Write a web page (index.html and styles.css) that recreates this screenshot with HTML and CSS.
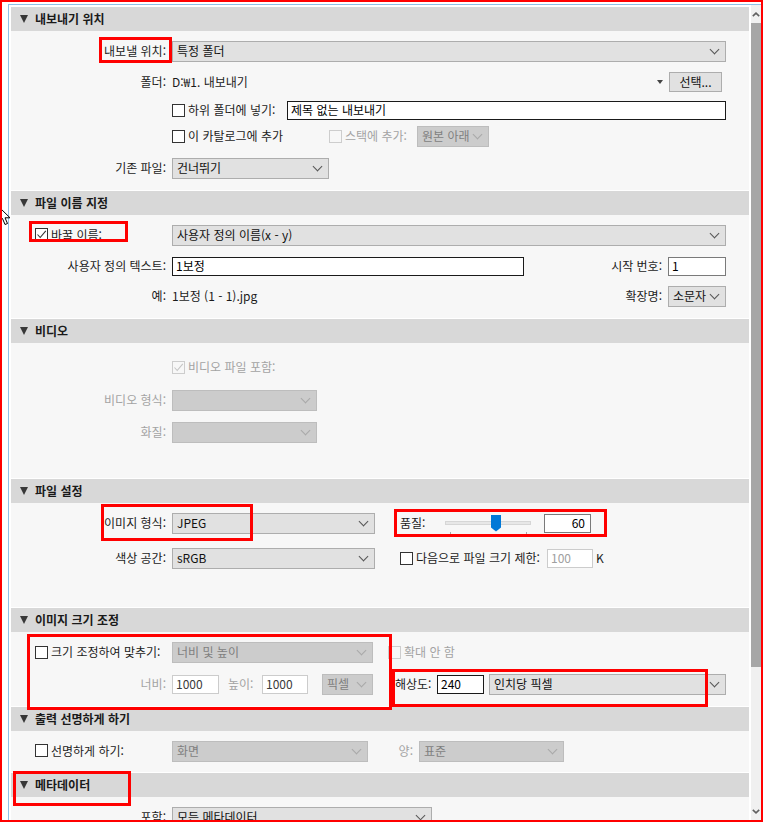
FILE: index.html
```html
<!DOCTYPE html>
<html lang="ko">
<head>
<meta charset="utf-8">
<title>내보내기</title>
<link rel="stylesheet" href="styles.css">
</head>
<body>
<div class="frame">
  <div class="panel">
    <div class="sections">

      <section class="sec">
        <div class="hdr"><span class="tri"></span>내보내기 위치</div>
        <div class="body b1">
          <div class="row">
            <span class="lbl">내보낼 위치:</span>
            <div class="sel grow">특정 폴더</div>
          </div>
          <div class="row">
            <span class="lbl">폴더:</span>
            <span>D:₩1. 내보내기</span>
            <span class="spacer"></span>
            <span class="ddtri"></span>
            <div class="btn">선택...</div>
          </div>
          <div class="row">
            <span class="lbl"></span>
            <span class="chk w115"><span class="cb"></span>하위 폴더에 넣기:</span>
            <div class="in blk grow">제목 없는 내보내기</div>
          </div>
          <div class="row">
            <span class="lbl"></span>
            <span class="chk w157"><span class="cb"></span>이 카탈로그에 추가</span>
            <span class="chk dis w82"><span class="cb"></span>스택에 추가:</span>
            <div class="sel dis w72 ml6">원본 아래</div>
          </div>
          <div class="row">
            <span class="lbl">기존 파일:</span>
            <div class="sel w157">건너뛰기</div>
          </div>
        </div>
      </section>

      <section class="sec">
        <div class="hdr"><span class="tri"></span>파일 이름 지정</div>
        <div class="body b2">
          <div class="row">
            <span class="lbl lbl-chk"><span class="cb on"><svg viewBox="0 0 11 11"><polyline points="1.5,5.5 4.2,8.5 9.8,1.8"/></svg></span>바꿀 이름:</span>
            <div class="sel grow">사용자 정의 이름(x - y)</div>
          </div>
          <div class="row">
            <span class="lbl">사용자 정의 텍스트:</span>
            <div class="in blk w352">1보정</div>
            <span class="spacer"></span>
            <span>시작 번호:</span>
            <div class="in w58 ml6">1</div>
          </div>
          <div class="row">
            <span class="lbl">예:</span>
            <span>1보정 (1 - 1).jpg</span>
            <span class="spacer"></span>
            <span>확장명:</span>
            <div class="sel w58 ml6">소문자</div>
          </div>
        </div>
      </section>

      <section class="sec">
        <div class="hdr"><span class="tri"></span>비디오</div>
        <div class="body b3">
          <div class="row">
            <span class="lbl"></span>
            <span class="chk dis"><span class="cb on"><svg viewBox="0 0 11 11"><polyline points="1.5,5.5 4.2,8.5 9.8,1.8"/></svg></span>비디오 파일 포함:</span>
          </div>
          <div class="row">
            <span class="lbl gray">비디오 형식:</span>
            <div class="sel dis w145"></div>
          </div>
          <div class="row">
            <span class="lbl gray">화질:</span>
            <div class="sel dis w145"></div>
          </div>
        </div>
      </section>

      <section class="sec">
        <div class="hdr"><span class="tri"></span>파일 설정</div>
        <div class="body b4">
          <div class="row">
            <span class="lbl">이미지 형식:</span>
            <div class="sel w203">JPEG</div>
            <span class="qlbl">품질:</span>
            <div class="slider">
              <div class="track"></div>
              <svg class="thumb" viewBox="0 0 10 17"><polygon points="0,0 10,0 10,12.5 5,16.5 0,12.5"/></svg>
              <span class="tick t1"></span>
              <span class="tick t2"></span>
            </div>
            <div class="in num w47">60</div>
          </div>
          <div class="row">
            <span class="lbl">색상 공간:</span>
            <div class="sel w203">sRGB</div>
            <span class="chk w147 ml25"><span class="cb"></span>다음으로 파일 크기 제한:</span>
            <div class="in dis w46">100</div>
            <span class="ml3">K</span>
          </div>
        </div>
      </section>

      <section class="sec">
        <div class="hdr"><span class="tri"></span>이미지 크기 조정</div>
        <div class="body b5">
          <div class="row">
            <span class="lbl lbl-chk"><span class="cb"></span>크기 조정하여 맞추기:</span>
            <div class="sel dis w201">너비 및 높이</div>
            <span class="chk dis ml15"><span class="cb"></span>확대 안 함</span>
          </div>
          <div class="row">
            <span class="lbl gray">너비:</span>
            <div class="in dim w47">1000</div>
            <span class="gray hlbl">높이:</span>
            <div class="in dim w46">1000</div>
            <div class="sel dis w51 ml14">픽셀</div>
            <span class="rlbl">해상도:</span>
            <div class="in blk w47">240</div>
            <div class="sel grow ml5">인치당 픽셀</div>
          </div>
        </div>
      </section>

      <section class="sec">
        <div class="hdr"><span class="tri"></span>출력 선명하게 하기</div>
        <div class="body b6">
          <div class="row">
            <span class="lbl lbl-chk"><span class="cb"></span>선명하게 하기:</span>
            <div class="sel dis w196">화면</div>
            <span class="gray amt">양:</span>
            <div class="sel dis w145">표준</div>
          </div>
        </div>
      </section>

      <section class="sec">
        <div class="hdr"><span class="tri"></span>메타데이터</div>
        <div class="body b7">
          <div class="row">
            <span class="lbl">포함:</span>
            <div class="sel w260">모든 메타데이터</div>
          </div>
        </div>
      </section>

    </div>
    <div class="scrollbar">
      <div class="sb-btn"><svg viewBox="0 0 8 5"><polyline points="0.8,4.2 4,1.2 7.2,4.2"/></svg></div>
      <div class="sb-thumb"></div>
      <div class="sb-track"></div>
      <div class="sb-btn"><svg viewBox="0 0 8 5"><polyline points="0.8,0.8 4,3.8 7.2,0.8"/></svg></div>
    </div>
  </div>

  <div class="mark m-a"></div>
  <div class="mark m-b"></div>
  <div class="mark m-c"></div>
  <div class="mark m-d"></div>
  <div class="mark m-e"></div>
  <div class="mark m-f"></div>
  <div class="mark m-g"></div>

  <svg class="cursor" viewBox="0 0 12 20"><polygon points="0,0 0,15 3.5,11.5 6,17.5 8.5,16.5 6,10.8 11,10.8"/></svg>
</div>
</body>
</html>
```

FILE: styles.css
```css
* { box-sizing: border-box; }
html, body { margin: 0; padding: 0; background: #fff; }
body {
  font-family: "Noto Sans CJK KR", "Noto Sans", sans-serif;
  font-size: 12px;
  line-height: 1.2;
  color: #1b1b1b;
}

.frame {
  position: relative;
  width: 763px;
  height: 822px;
  border: 2px solid #ff0000;
  background: #fff;
  overflow: hidden;
  padding: 2px 0 0 6px;
}

.panel {
  display: flex;
  height: 816px;
  border-top: 1px solid #8fbfe6;
  border-left: 1px solid #8fbfe6;
  padding-left: 2px;
  gap: 2px;
}

.sections {
  width: 738px;
  flex-shrink: 0;
  margin-top: 2px;
  overflow: hidden;
}

.sec { margin-bottom: 1px; }

.hdr {
  height: 24px;
  background: #d8d8d8;
  display: flex;
  align-items: center;
  padding-left: 9px;
  font-weight: 700;
  color: #1a1a1a;
}
.tri {
  width: 0; height: 0;
  border-left: 4.5px solid transparent;
  border-right: 4.5px solid transparent;
  border-top: 8px solid #383838;
  margin-right: 7px;
}

.body {
  background: #f7f7f7;
  display: grid;
  padding-right: 23px;
  align-content: start;
}
.b1 { height: 159px; padding-top: 6px; grid-template-rows: 29px 32px 25px 27px 37px; }
.b2 { height: 103px; padding-top: 6px; grid-template-rows: 28px 35px 25px; }
.b3 { height: 135px; padding-top: 10px; grid-template-rows: 29px 37px 26px; }
.b4 { height: 104px; padding-top: 8px; grid-template-rows: 25px 45px; }
.b5 { height: 74px; padding-top: 6px; grid-template-rows: 29px 35px; }
.b6 { height: 41px; padding-top: 8px; grid-template-rows: 24px; }
.b7 { height: 60px; padding-top: 10px; grid-template-rows: 21px; }

.row {
  display: flex;
  align-items: center;
  white-space: nowrap;
}

.lbl {
  width: 155px;
  margin-right: 6px;
  text-align: right;
  flex-shrink: 0;
}
.lbl-chk {
  display: flex;
  align-items: center;
  text-align: left;
  padding-left: 24px;
}
.gray { color: #a3a3a3; }
.spacer { flex: 1; }
.grow { flex: 1; }

.chk { display: flex; align-items: center; flex-shrink: 0; }
.chk.dis { color: #a3a3a3; }
.cb {
  width: 13px; height: 13px;
  border: 1px solid #333;
  background: #fff;
  margin-right: 3px;
  flex-shrink: 0;
  display: flex;
}
.cb svg { width: 11px; height: 11px; fill: none; stroke: #333; stroke-width: 1.1; }
.chk.dis .cb { border-color: #cdcdcd; background: #f7f7f7; }
.chk.dis .cb svg { stroke: #c4c4c4; }

.sel {
  height: 21px;
  background: #e1e1e1;
  border: 1px solid #adadad;
  display: flex;
  align-items: center;
  padding-left: 4px;
  flex-shrink: 0;
  color: #111;
}
.sel::after {
  content: "";
  width: 6px; height: 6px;
  border-right: 1px solid #555;
  border-bottom: 1px solid #555;
  transform: rotate(45deg);
  margin-left: auto;
  margin-right: 7px;
  margin-top: -4px;
  flex-shrink: 0;
}
.sel.dis { background: #cccccc; border-color: #bdbdbd; color: #7f7f7f; }
.sel.dis::after { border-color: #a9a9a9; }
.sel.grow { flex: 1; }

.in {
  height: 19px;
  background: #fff;
  border: 1px solid #7a7a7a;
  padding-left: 3px;
  display: flex;
  align-items: center;
  flex-shrink: 0;
  color: #000;
}
.in.blk { border-color: #1a1a1a; }
.in.dis { border-color: #cccccc; color: #a0a0a0; }
.in.dim { border-color: #cccccc; color: #3a3a3a; }
.in.num { justify-content: flex-end; padding-right: 5px; }
.in.grow { flex: 1; }

.btn {
  width: 53px; height: 20px;
  background: #e1e1e1;
  border: 1px solid #adadad;
  display: flex;
  align-items: center;
  justify-content: center;
  margin-left: 6px;
  margin-right: 4px;
  color: #111;
}
.ddtri {
  width: 0; height: 0;
  border-left: 3.5px solid transparent;
  border-right: 3.5px solid transparent;
  border-top: 4px solid #444;
}

.qlbl { width: 45px; margin-left: 25px; flex-shrink: 0; }
.slider { position: relative; width: 86px; height: 20px; margin-right: 13px; flex-shrink: 0; }
.track {
  margin-top: 7px;
  height: 4px;
  background: #e7e7e7;
  border: 1px solid #d6d6d6;
}
.thumb { position: absolute; left: 46px; top: 1px; width: 10px; height: 17px; fill: #0078d7; }
.tick { position: absolute; top: 18px; width: 1px; height: 3px; background: #a8a8a8; }
.t1 { left: 5px; }
.t2 { left: 81px; }

.hlbl { width: 34px; margin-left: 9px; flex-shrink: 0; }
.rlbl { width: 42px; margin-left: 22px; flex-shrink: 0; }
.amt { width: 45px; margin-right: 6px; text-align: right; flex-shrink: 0; }

.w46 { width: 46px; }
.w47 { width: 47px; }
.w51 { width: 51px; }
.w58 { width: 58px; }
.w72 { width: 72px; }
.w82 { width: 82px; }
.w115 { width: 115px; }
.w145 { width: 145px; }
.w147 { width: 147px; }
.w157 { width: 157px; }
.w196 { width: 196px; }
.w201 { width: 201px; }
.w203 { width: 203px; }
.w260 { width: 260px; }
.w352 { width: 352px; }
.ml3 { margin-left: 3px; }
.ml5 { margin-left: 5px; }
.ml6 { margin-left: 6px; }
.ml14 { margin-left: 14px; }
.ml15 { margin-left: 15px; }
.ml25 { margin-left: 25px; }

.scrollbar {
  width: 10px;
  flex-shrink: 0;
  background: #f0f0f0;
  display: flex;
  flex-direction: column;
}
.sb-btn {
  height: 18px;
  display: flex;
  align-items: center;
  justify-content: center;
  flex-shrink: 0;
}
.sb-btn svg { width: 8px; height: 5px; fill: none; stroke: #606060; stroke-width: 1.6; }
.sb-thumb { height: 644px; background: #a6a6a6; flex-shrink: 0; }
.sb-track { flex: 1; }

.mark {
  position: absolute;
  border: 3px solid #ff0000;
}
.m-a { left: 97px; top: 35px; width: 73px; height: 26px; }
.m-b { left: 27px; top: 219px; width: 99px; height: 21px; }
.m-c { left: 99px; top: 502px; width: 152px; height: 37px; }
.m-d { left: 392px; top: 507px; width: 213px; height: 28px; }
.m-e { left: 25px; top: 632px; width: 365px; height: 76px; }
.m-f { left: 390px; top: 667px; width: 316px; height: 38px; }
.m-g { left: 11px; top: 769px; width: 118px; height: 35px; }

.cursor {
  position: absolute;
  left: -3px;
  top: 205px;
  width: 12px;
  height: 20px;
  fill: #fff;
  stroke: #000;
  stroke-width: 1;
}
```
